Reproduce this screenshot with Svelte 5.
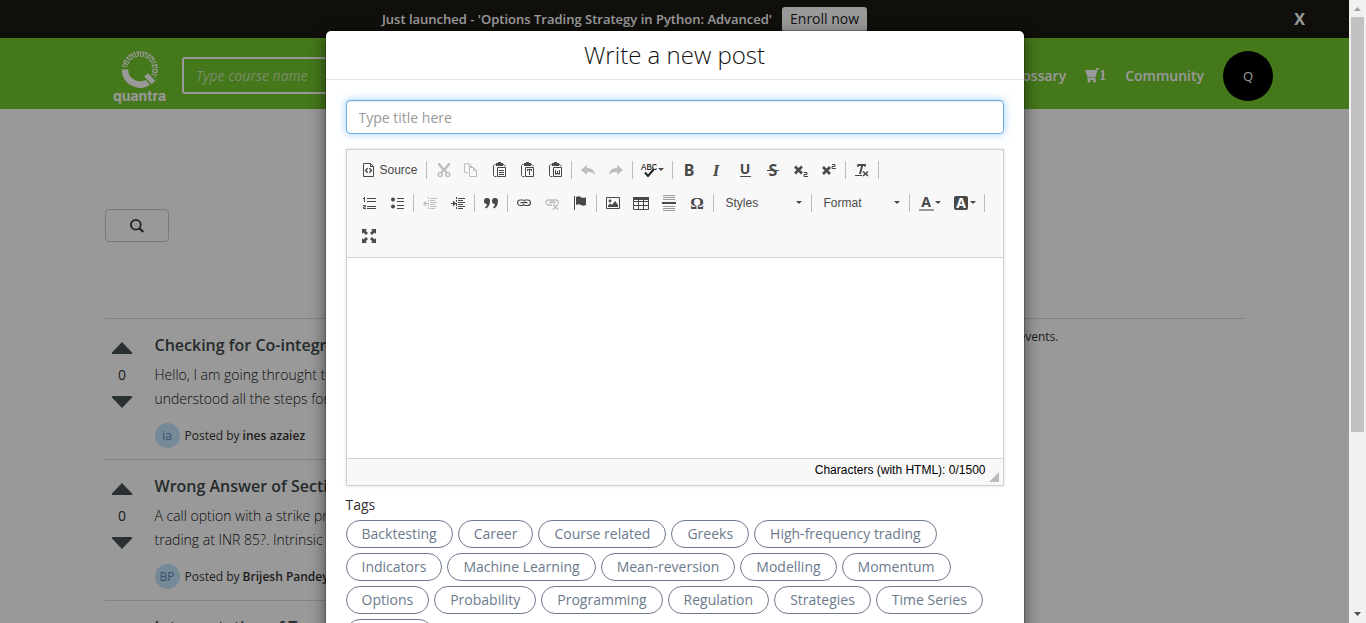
<script>
  const clipboard = '<path d="M4.500 2.500h-1l-1 1v10l1 1h2M12 2.500h1l1 1v1" fill="none" stroke="currentColor"/><path d="M5 1h2V0h3v1h2v3H5z" fill="currentColor"/><path d="M6.500 5.500h8v9h-8z" fill="none" stroke="currentColor"/>';
  const indentLines = '<path d="M8 3h7v1H8zM8 5h5v1H8zM8 7h7v1H8zM8 9h5v1H8zM8 11h7v1H8zM8 13h5v1H8zM6 2h1v2H6zM6 5h1v2H6zM6 9h1v2H6zM6 12h1v2H6zM1 8h6v1H1z" fill="currentColor"/>';
  const icons = {
    source: '<path d="M2.500 1.500h7l3 3v10h-10z" fill="none" stroke="currentColor"/><path d="M9 1v4h4L12 4H10V2z" fill="currentColor"/><path d="M6.600 6.200 4.600 8.500l2 2.300M8.400 6.200l2 2.300-2 2.300" fill="none" stroke="currentColor" stroke-width="1.400"/>',
    cut: '<path d="M3 1h1.600L9 6.200 13.400 1H15v2.200L10.600 8l1.800 1.800-1.800 1.200L9 9.600 7.400 11 5.600 9.800 7.400 8 3 3.200z" fill="currentColor"/><circle cx="5.200" cy="12.400" r="2" fill="none" stroke="currentColor" stroke-width="1.500"/><circle cx="12.800" cy="12.400" r="2" fill="none" stroke="currentColor" stroke-width="1.500"/>',
    copy: '<path d="M5 10.500H1.500v-9h4.500l3 3M6 1.500v3h3" fill="none" stroke="currentColor"/><path d="M6.500 5.500h4l3 3v6h-7zM10.500 5.500v3h3" fill="none" stroke="currentColor"/>',
    paste: clipboard + '<path d="M8 8.500h5M8 10.500h5M8 12.500h5" stroke="currentColor"/>',
    pastetext: clipboard + '<path d="M8 7h5v2h-1V8h-1v5h-1V8H9v1H8z" fill="currentColor"/>',
    pasteword: clipboard + '<path d="M8 8h1v3h1V9h1v2h1V8h1v4l-1 1-1-1h-1l-1 1-1-1z" fill="currentColor"/>',
    undo: '<path d="M1 8l6-5v3c5 0 7.500 2.500 8 7-2-2.500-4-3.500-8-3v3z" fill="currentColor"/>',
    redo: '<path d="M15 8L9 3v3c-5 0-7.500 2.500-8 7 2-2.500 4-3.500 8-3v3z" fill="currentColor"/>',
    spell: '<text x="0" y="8" font-size="9" fill="#000" font-family="Liberation Mono, monospace">ABC</text><path d="M4 10.500 7 14l6-7" fill="none" stroke="#222" stroke-width="2"/>',
    bold: '<text x="8" y="14" text-anchor="middle" font-size="16" font-weight="700" fill="currentColor" font-family="Noto Sans, sans-serif">B</text>',
    italic: '<text x="7" y="14" text-anchor="middle" font-size="17" font-weight="700" font-style="italic" fill="currentColor" font-family="Liberation Serif, serif">I</text>',
    underline: '<text x="8" y="12" text-anchor="middle" font-size="14" font-weight="700" fill="currentColor" font-family="Noto Sans, sans-serif">U</text><path d="M3 14h11v1H3z" fill="currentColor"/>',
    strike: '<text x="8" y="14" text-anchor="middle" font-size="16" font-weight="700" fill="currentColor" font-family="Noto Sans, sans-serif">S</text><path d="M2 8h12v1H2z" fill="currentColor"/>',
    sub: '<path d="M2 4.500l7 7M9 4.500l-7 7" stroke="currentColor" stroke-width="2.600"/><path d="M11 10.500h3v2h-3v2h4" fill="none" stroke="currentColor"/>',
    sup: '<path d="M2 5l7 7M9 5l-7 7" stroke="currentColor" stroke-width="2.600"/><path d="M11 2.500h3v2h-3v2h4" fill="none" stroke="currentColor"/>',
    clear: '<path d="M3.500 2H12l-.5 3h-1l-.3-1H9L7 12H5l2-8H5l-1 1H3z" fill="currentColor"/><path d="M1 13h7v1H1z" fill="currentColor"/><path d="M9 9.500l5 4.500M14 9.500L9 14" stroke="currentColor" stroke-width="1.600"/>',
    ol: '<path d="M3 2h1v5H3zM2 3h1v1H2zM6 3h9v1H6zM6 6h9v1H6zM6 11h9v1H6zM6 13h9v1H6z" fill="currentColor"/><path d="M2 10.500h2.500v1.500H2.500v1.500H5" fill="none" stroke="currentColor"/>',
    ul: '<circle cx="4" cy="4.500" r="2" fill="currentColor"/><circle cx="4" cy="11.500" r="2" fill="currentColor"/><path d="M8 3h7v1H8zM8 6h7v1H8zM8 10h7v1H8zM8 13h7v1H8z" fill="currentColor"/>',
    outdent: indentLines + '<path d="M4 5.500v6l-3-3z" fill="currentColor"/>',
    indent: indentLines + '<path d="M3 5.500v6l3-3z" fill="currentColor"/>',
    quote: '<path d="M4 3a2.700 2.700 0 0 1 3 3c0 4-2 6.500-4 7.500l-1-1c1-.8 1.800-2 2-3.500A2.600 2.600 0 0 1 1 6a2.700 2.700 0 0 1 3-3zM12 3a2.700 2.700 0 0 1 3 3c0 4-2 6.500-4 7.500l-1-1c1-.8 1.800-2 2-3.500A2.600 2.600 0 0 1 9 6a2.700 2.700 0 0 1 3-3z" fill="currentColor"/>',
    link: '<path d="M7 10.500H4.300a2.700 2.700 0 0 1 0-5.500H7a2.500 2.500 0 0 1 2 1.500M9 5h2.700a2.700 2.700 0 0 1 0 5.500H9a2.500 2.500 0 0 1-2-1.500M4.500 7.700h7" fill="none" stroke="currentColor" stroke-width="1.200"/>',
    unlink: '<path d="M8 10H4.500a2.500 2.500 0 0 1 0-5H8a2.500 2.500 0 0 1 1.500 2.500M7 7.500A2.500 2.500 0 0 1 8.500 5H12a2.500 2.500 0 0 1 2 4M5 7.500h7" fill="none" stroke="currentColor" stroke-width="1.300"/><path d="M9 9.500l5 5M14 9.500l-5 5" stroke="currentColor" stroke-width="1.600"/>',
    flag: '<path d="M2 1h1v14H2zM4 2c2-1 3.500-1 5 .2 1.500.8 3.500.6 5 0V10c-2 1-3.500 1-5 0-1.500-1-3.500-.8-5 0z" fill="currentColor"/>',
    image: '<path d="M1.500 2.500h13v11h-13z" fill="none" stroke="currentColor"/><circle cx="5" cy="6" r="1.400" fill="currentColor"/><path d="M3 12V10.500l2.500-2L7 10l3-4 3 4v2z" fill="currentColor"/>',
    table: '<path d="M.5 2.500h15v12H.5zM0 6.500h16M0 10.500h16M5.500 5v10M10.500 5v10" fill="none" stroke="currentColor"/><path d="M0 2h16v3H0z" fill="currentColor"/>',
    hr: '<path d="M2 0h12v1H2zM2 2h12v1H2zM2 4h12v1H2zM2 11h12v1H2zM2 13h12v1H2zM2 15h12v1H2z" fill="#999"/><path d="M1 7h14v2H1z" fill="currentColor"/>',
    omega: '<text x="8" y="14" text-anchor="middle" font-size="17" font-weight="700" fill="currentColor" font-family="Liberation Serif, serif">Ω</text>',
    color: '<text x="8" y="12" text-anchor="middle" font-size="14" font-weight="700" fill="currentColor" font-family="Noto Sans, sans-serif">A</text><path d="M1 14h15v2H1z" fill="#999"/>',
    bgcolor: '<rect x="1" y="1" width="14" height="14" rx="2" fill="currentColor"/><text x="8" y="13" text-anchor="middle" font-size="14" font-weight="700" fill="#fff" font-family="Noto Sans, sans-serif">A</text>',
    maximize: '<path d="M1 1h5L4.500 2.500l2.500 2.500-2 2-2.500-2.500L1 6zM15 1v5l-1.500-1.500L11 7 9 5l2.500-2.500L10 1zM1 15v-5l1.500 1.500L5 9l2 2-2.500 2.500L6 15zM15 15h-5l1.500-1.500L9 11l2-2 2.500 2.500L15 10z" fill="currentColor"/>'
  };

  const b = (icon, label, extra = {}) => ({ icon, label, ...extra });
  const off = { off: true };
  const rows = [
    [
      [b('source', 'Source', { text: true })],
      [b('cut', 'Cut', off), b('copy', 'Copy', off), b('paste', 'Paste'), b('pastetext', 'Paste as plain text'), b('pasteword', 'Paste from Word')],
      [b('undo', 'Undo', off), b('redo', 'Redo', off)],
      [b('spell', 'Spell check', { menu: true })],
      [b('bold', 'Bold'), b('italic', 'Italic'), b('underline', 'Underline'), b('strike', 'Strikethrough'), b('sub', 'Subscript'), b('sup', 'Superscript')],
      [b('clear', 'Remove format')]
    ],
    [
      [b('ol', 'Numbered list'), b('ul', 'Bulleted list')],
      [b('outdent', 'Decrease indent', off), b('indent', 'Increase indent')],
      [b('quote', 'Block quote')],
      [b('link', 'Link'), b('unlink', 'Unlink', off), b('flag', 'Anchor')],
      [b('image', 'Image'), b('table', 'Table'), b('hr', 'Horizontal line'), b('omega', 'Special character')],
      [{ select: 'Styles' }],
      [{ select: 'Format' }],
      [b('color', 'Text colour', { menu: true }), b('bgcolor', 'Background colour', { menu: true })]
    ],
    [[b('maximize', 'Maximize')]]
  ];

  const tags = ['Backtesting', 'Career', 'Course related', 'Greeks', 'High-frequency trading', 'Indicators', 'Machine Learning', 'Mean-reversion', 'Modelling', 'Momentum', 'Options', 'Probability', 'Programming', 'Regulation', 'Strategies', 'Time Series', 'Volatility'];

  const posts = [
    { title: 'Checking for Co-integration', lines: ['Hello, I am going throught the', 'understood all the steps for'], initials: 'ia', author: 'ines azaiez' },
    { title: 'Wrong Answer of Section', lines: ['A call option with a strike price', 'trading at INR 85?. Intrinsic'], initials: 'BP', author: 'Brijesh Pandey' },
    { title: 'Interpretation of T', lines: [], initials: '', author: '' }
  ];
</script>

<div class="window">
  <div class="viewport">
    <div class="promo">
      <strong>Just launched - 'Options Trading Strategy in Python: Advanced'</strong>
      <button class="enroll">Enroll now</button>
      <button class="dismiss" aria-label="Close banner">X</button>
    </div>

    <header>
      <a class="logo" href="#home">
        <svg width="40" height="40" viewBox="0 0 40 40" aria-hidden="true">
          <path d="M5 20.500a15 15 0 0 0 24 12" fill="none" stroke="#fff" stroke-width="6.500" />
          <circle cx="20" cy="20" r="17.200" fill="none" stroke="#fff" stroke-width="1.200" stroke-dasharray="4 1.500 2 1" clip-path="url(#ring)" />
          <circle cx="20" cy="20" r="15" fill="none" stroke="#fff" stroke-width="4" stroke-dasharray="1 1.700 1.400 1.300" clip-path="url(#ring)" />
          <circle cx="20" cy="20" r="12.800" fill="none" stroke="#fff" stroke-width="1" stroke-dasharray="3 2" clip-path="url(#ring)" />
          <clipPath id="ring"><path d="M0 0h40v36L29 25 20 18H0z" /></clipPath>
          <path d="M26 26l9 9" stroke="#73c72d" stroke-width="8" />
          <path d="M26 26l7.500 7.500" stroke="#fff" stroke-width="5" />
        </svg>
        <span>quantra</span>
      </a>
      <input class="course" type="text" placeholder="Type course name" aria-label="Course name" />
      <nav>
        <a href="#glossary">Glossary</a>
        <a class="cart" href="#cart" aria-label="Cart, 1 item">
          <svg width="14" height="15" viewBox="0 0 14 15" aria-hidden="true">
            <path d="M0 2h10.500L11.500 0H14v1.500h-1.500L10.500 9.500h-8z" fill="#fff" />
            <path d="M2.500 10h8v2h-8z" fill="#fff" />
            <circle cx="4" cy="13" r="1.500" fill="#fff" />
            <circle cx="9.500" cy="13" r="1.500" fill="#fff" />
          </svg><span>1</span>
        </a>
        <a href="#community">Community</a>
        <button class="avatar">Q</button>
      </nav>
    </header>

    <main>
      <button class="search" aria-label="Search">
        <svg width="14" height="14" viewBox="0 0 14 14" aria-hidden="true">
          <circle cx="5.800" cy="5.800" r="4.900" fill="none" stroke="#333" stroke-width="1.700" />
          <path d="M9.300 9.300l4 3.700" stroke="#333" stroke-width="2.200" />
        </svg>
      </button>
      <div class="columns">
        <section class="posts">
          {#each posts as post}
            <article>
              <div class="votes">
                <button aria-label="Vote up"><svg width="22" height="12" viewBox="0 0 22 12"><path d="M11 0l10 10.500q1 1.500-1 1.500H2q-2 0-1-1.500z" fill="#465254" /></svg></button>
                <span>0</span>
                <button aria-label="Vote down"><svg width="22" height="12" viewBox="0 0 22 12"><path d="M11 12l10-10.500q1-1.500-1-1.500H2q-2 0-1 1.500z" fill="#465254" /></svg></button>
              </div>
              <div class="post">
                <h2>{post.title}</h2>
                <p>{#each post.lines as line}{line}<br />{/each}</p>
                <div class="author">
                  <span class="initials">{post.initials}</span>
                  <span>Posted by <b>{post.author}</b></span>
                </div>
              </div>
            </article>
          {/each}
        </section>
        <aside>events.</aside>
      </div>
    </main>

    <div class="backdrop">
      <div class="modal" role="dialog" aria-labelledby="modal-title">
        <h1 id="modal-title">Write a new post</h1>
        <div class="body">
          <input class="title" type="text" placeholder="Type title here" aria-label="Post title" />
          <div class="editor">
            <div class="toolbar">
              {#each rows as row, r}
                <div class="row">
                  {#each row as group}
                    <div class="group" class:last={r === 2}>
                      {#each group as item}
                        {#if item.select}
                          <span class="combo">
                            <select aria-label={item.select}><option>{item.select}</option></select>
                            <i class="caret"></i>
                          </span>
                        {:else}
                          <button class:off={item.off} class:menu={item.menu} aria-label={item.label} disabled={item.off}>
                            <svg width="16" height="16" viewBox="0 0 16 16" aria-hidden="true">{@html icons[item.icon]}</svg>
                            {#if item.text}<span>{item.label}</span>{/if}
                            {#if item.menu}<i class="caret"></i>{/if}
                          </button>
                        {/if}
                      {/each}
                    </div>
                  {/each}
                </div>
              {/each}
            </div>
            <textarea aria-label="Post body"></textarea>
            <div class="status">
              <span>Characters (with HTML): 0/1500</span>
              <i class="grip"></i>
            </div>
          </div>
          <div class="label">Tags</div>
          <div class="tags">
            {#each tags as tag}<button>{tag}</button>{/each}
          </div>
        </div>
      </div>
    </div>
  </div>

  <div class="scrollbar" aria-hidden="true">
    <svg width="17" height="17" viewBox="0 0 17 17"><path d="M5 11h7L8.500 7z" fill="#a3a3a3" /></svg>
    <div class="track"><div class="thumb"></div></div>
    <svg width="17" height="17" viewBox="0 0 17 17"><path d="M5 6h7l-3.500 4z" fill="#505050" /></svg>
  </div>
</div>

<style>
  :global(body) { margin: 0; overflow: hidden; }
  * { box-sizing: border-box; }
  button, input, select, textarea { font: inherit; color: inherit; margin: 0; }
  button { padding: 0; border: 0; background: none; cursor: pointer; }
  a { color: inherit; text-decoration: none; }
  h1, h2, p { margin: 0; font-weight: 400; }
  svg { display: block; flex: none; }

  .window { display: flex; height: 100vh; font: 14px/20px "Open Sans", sans-serif; color: #333; }
  .viewport { position: relative; flex: 1; min-width: 0; overflow: hidden; background: #fff; }

  .promo { position: relative; display: flex; align-items: center; justify-content: center; gap: 10px; height: 38px; padding-right: 100px; background: #1b1914; color: #fff; font-size: 13px; }
  .promo strong { font-weight: 600; }
  .enroll { height: 25px; padding: 0 8px; border-radius: 3px; background: #fff; color: #222; font-size: 14px; }
  .dismiss { position: absolute; right: 44px; top: 9px; font-size: 16px; font-weight: 700; }

  header { display: flex; align-items: center; height: 71px; padding: 4px 76px 0 112px; background: #73c72d; color: #fff; }
  .logo { display: flex; flex-direction: column; align-items: center; width: 55px; font: 700 14px/14px Inter, sans-serif; }
  .course { width: 300px; height: 37px; margin-left: 15px; padding: 0 12px; border: 2px solid #fff; border-radius: 3px; background: transparent; }
  .course::placeholder { color: #fff; font-style: italic; opacity: .6; }
  nav { display: flex; align-items: center; gap: 19px; margin-left: auto; font-weight: 600; }
  .cart { display: flex; align-items: flex-end; font: 700 14px/14px "Liberation Serif", serif; }
  .avatar { width: 50px; height: 50px; border-radius: 50%; background: #000; font-size: 13px; font-weight: 400; }

  main { max-width: 1140px; margin: 0 auto; padding-top: 100px; }
  .search { display: flex; align-items: center; justify-content: center; width: 64px; height: 33px; border: 1px solid #ccc; border-radius: 4px; }
  .columns { display: flex; justify-content: space-between; margin-top: 76px; border-top: 1px solid #ddd; }
  .posts { width: 700px; }
  article { display: flex; gap: 21px; height: 141px; padding: 14px 0 11px 6px; border-bottom: 1px solid #ddd; }
  .votes { display: flex; flex-direction: column; align-items: center; gap: 11px; width: 23px; padding-top: 9px; }
  .post { white-space: nowrap; }
  h2 { font-size: 16px; line-height: 24px; font-weight: 600; color: #3f484a; }
  p { height: 48px; margin: 6px 0 12px; line-height: 24px; font-weight: 300; color: #111; }
  .author { display: flex; align-items: center; gap: 5px; font-size: 12px; }
  .author b { font-weight: 600; }
  .initials { width: 25px; height: 25px; border-radius: 50%; background: #c4e4fa; color: #5889b8; line-height: 25px; text-align: center; }
  aside { width: 226px; padding-top: 8px; font-size: 12px; }

  .backdrop { position: absolute; inset: 0; overflow: hidden; padding-top: 30px; background: rgba(0, 0, 0, .4); }
  .modal { max-width: 700px; margin: 0 auto; border: 1px solid rgba(0, 0, 0, .2); border-radius: 6px; background: #fff; background-clip: padding-box; box-shadow: 0 5px 15px rgba(0, 0, 0, .5); }
  h1 { padding: 8px 0; border-bottom: 1px solid #e5e5e5; font-size: 24px; line-height: 32px; font-weight: 300; color: #111; text-align: center; }
  .body { padding: 20px; }
  .title { display: block; width: 100%; height: 34px; padding: 0 12px; border: 1px solid #66afe9; border-radius: 4px; outline: 0; box-shadow: inset 0 1px 1px rgba(0, 0, 0, .075), 0 0 8px rgba(102, 175, 233, .6); }
  .title::placeholder { color: #999; }

  .editor { margin-top: 15px; border: 1px solid #d1d1d1; box-shadow: 0 0 3px rgba(0, 0, 0, .15); font: 12px/16px "Liberation Sans", Arial, sans-serif; }
  .toolbar { padding: 3px 8px 5px; border-bottom: 1px solid #d1d1d1; background: #f8f8f8; color: #484848; }
  .row, .group { display: flex; align-items: center; }
  .row { height: 33px; }
  .group:not(.last)::after { content: ""; width: 1px; height: 18px; margin: 0 2px; background: #bcbcbc; }
  .group button { display: flex; align-items: center; gap: 3px; height: 26px; padding: 0 6px; color: #484848; }
  .group .menu { gap: 1px; }
  .group .off { color: #bebebe; }
  .caret { width: 0; height: 0; border: 3px solid transparent; border-top-color: #484848; border-bottom: 0; }
  .combo { display: flex; align-items: center; width: 93px; padding: 0 7px 0 10px; }
  .combo select { flex: 1; min-width: 0; padding: 0; border: 0; background: none; appearance: none; }
  textarea { display: block; width: 100%; height: 200px; padding: 20px; border: 0; outline: 0; resize: none; }
  .status { display: flex; justify-content: flex-end; gap: 3px; height: 27px; padding: 3px 4px; border-top: 1px solid #d1d1d1; background: #f8f8f8; color: #000; }
  .grip { align-self: flex-end; border: 5px solid; border-color: transparent #bcbcbc #bcbcbc transparent; }

  .label { margin-top: 9px; }
  .tags { display: flex; flex-wrap: wrap; gap: 5px; margin-top: 5px; }
  .tags button { height: 28px; padding: 0 15px; border: 1px solid #6c7a8c; border-radius: 14px; color: #6c7a8c; }

  .scrollbar { display: flex; flex-direction: column; flex: none; width: 17px; background: #f1f1f1; }
  .track { flex: 1; }
  .thumb { height: 70.500%; margin: 0 2px; background: #c1c1c1; }
</style>
